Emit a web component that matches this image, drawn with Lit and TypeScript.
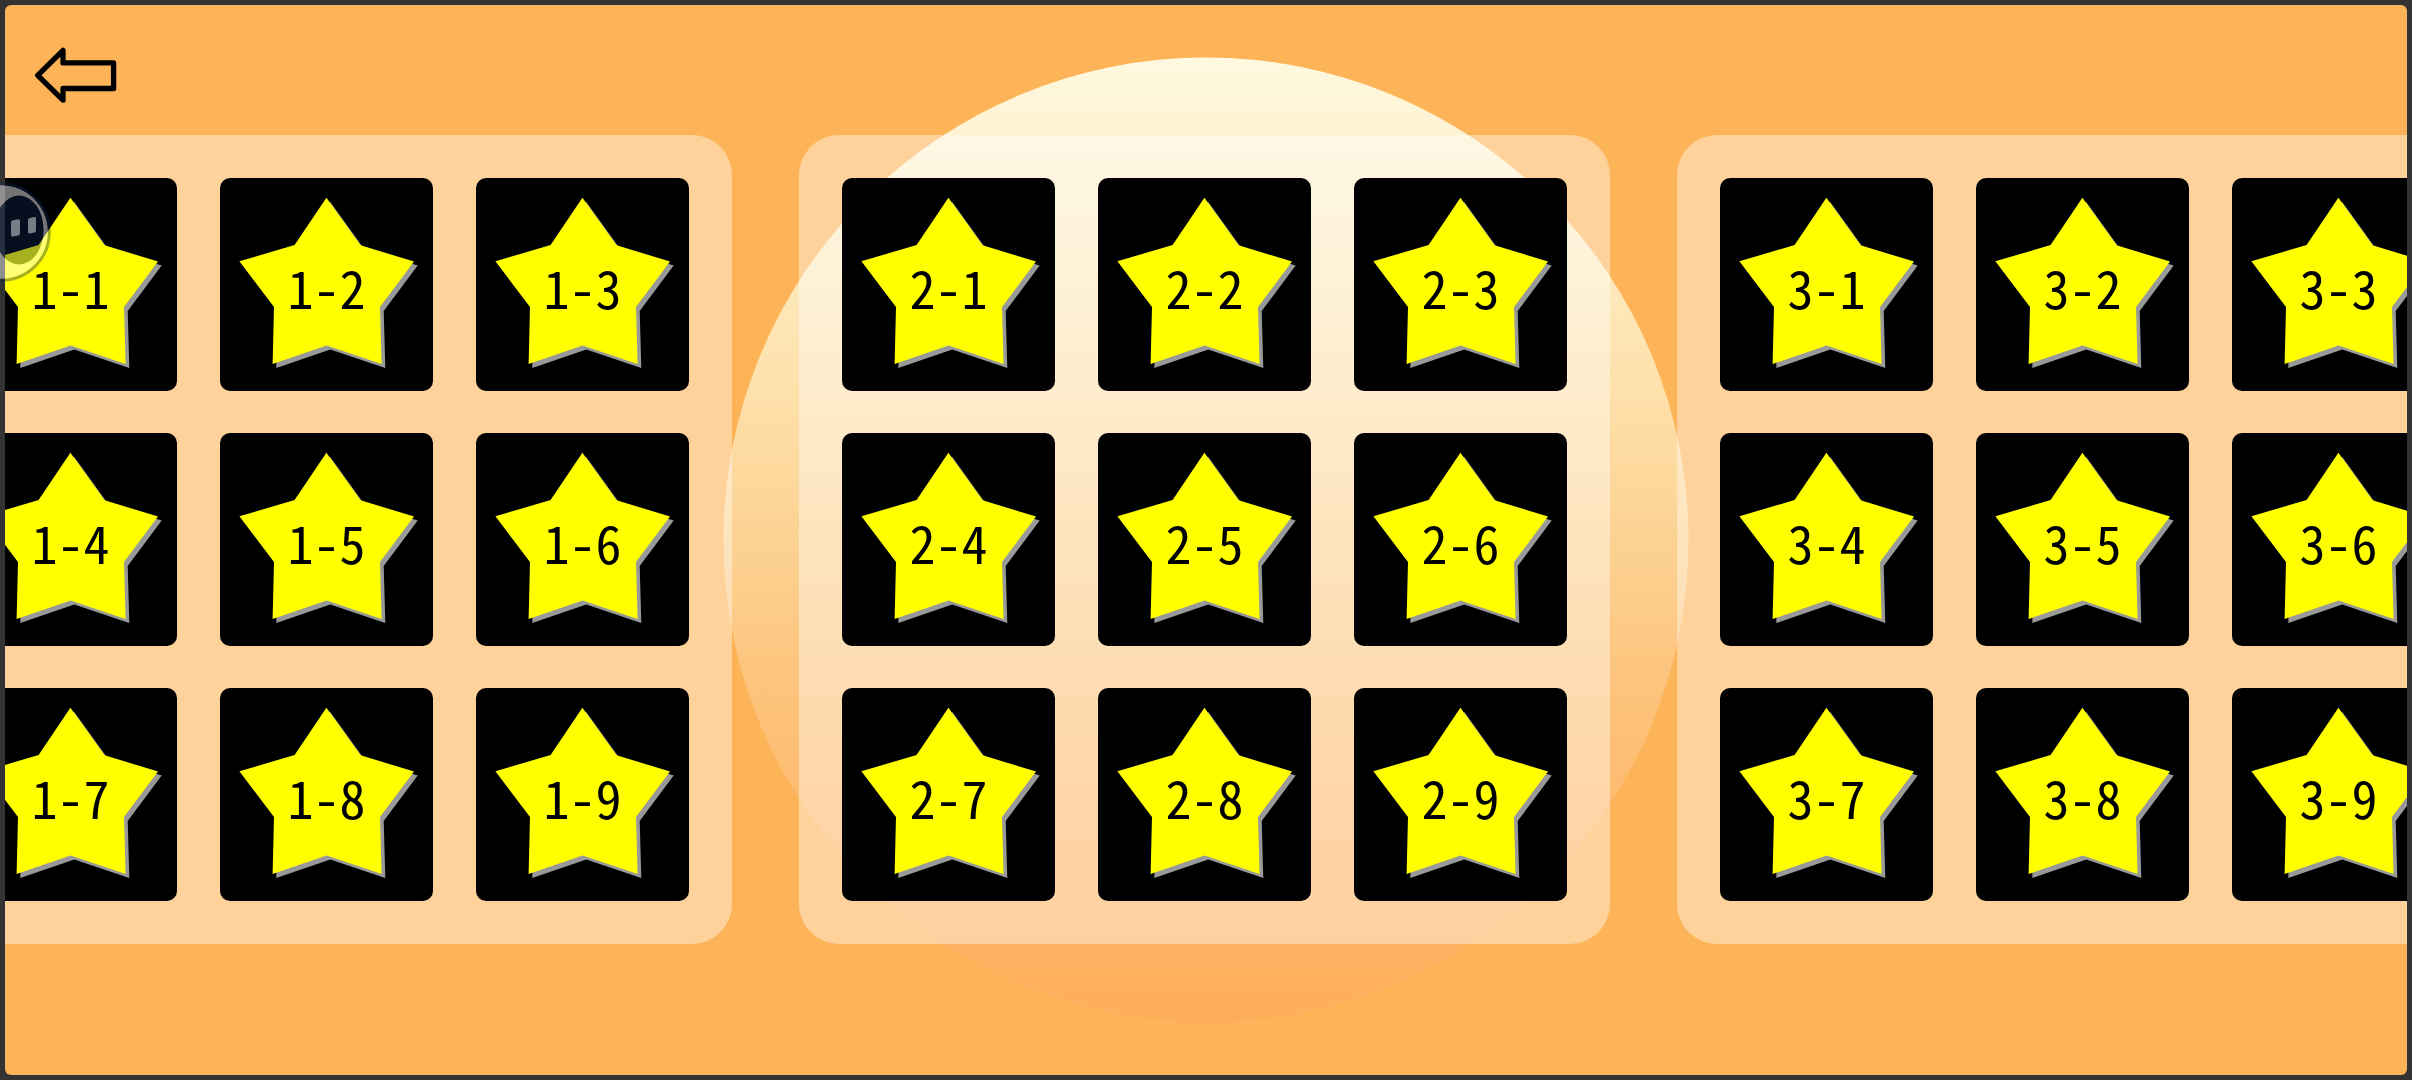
import { LitElement, html, css, svg } from "lit";
import { customElement, property } from "lit/decorators.js";

@customElement("level-tile")
class LevelTile extends LitElement {
  @property() label = "";

  static styles = css`
    :host {
      display: block;
    }
    .tile {
      display: grid;
      place-items: center;
      width: 213px;
      height: 213px;
      padding: 0;
      border: 0;
      border-radius: 10px;
      background: #000;
      color: #000;
      cursor: pointer;
    }
    .star,
    .name {
      grid-area: 1 / 1;
    }
    .star {
      display: block;
      width: 213px;
      height: 213px;
    }
    .name {
      padding-top: 4px;
      font: 300 52px/60px "Noto Sans Mono CJK JP", "Noto Sans Mono CJK SC", "Noto Sans CJK JP", sans-serif;
    }
  `;

  render() {
    const star =
      "106.4,19.7 140.6,67.2 194,83.6 160,129 161.6,186 106.6,167.4 52.6,186 54,129 19.4,83.3 74.6,67";
    return html`
      <button class="tile">
        <svg class="star" viewBox="0 0 213 213" aria-hidden="true">
          ${svg`<polygon points=${star} fill="#999" transform="translate(3.7 4)"></polygon>
          <polygon points=${star} fill="#ff0"></polygon>`}
        </svg>
        <span class="name">${this.label}</span>
      </button>
    `;
  }
}

@customElement("app-root")
class AppRoot extends LitElement {
  static styles = css`
    :host {
      display: block;
    }
    .screen {
      position: relative;
      box-sizing: border-box;
      min-height: 100vh;
      padding: 5px;
      background: #333;
      overflow: hidden;
    }
    .stage {
      position: relative;
      display: flex;
      flex-direction: column;
      box-sizing: border-box;
      min-height: calc(100vh - 10px);
      border-radius: 6px;
      background: #fdb458;
      overflow: hidden;
    }
    .sun {
      position: absolute;
      top: 50%;
      left: 50%;
      width: 965px;
      height: 965px;
      transform: translate(-50%, -50%);
      border-radius: 50%;
      background: linear-gradient(#fff9e0, #fef3d2 8%, #fee0aa 35%, #fcd292 50%, #fdc27a 67%, #feb262 90%, #feae5b);
    }
    .bar {
      position: relative;
      display: flex;
      align-items: center;
      height: 130px;
      padding: 10px 30px 0;
      box-sizing: border-box;
    }
    .back {
      padding: 0;
      border: 0;
      background: none;
      cursor: pointer;
    }
    .arrow {
      display: block;
      width: 82px;
      height: 56px;
    }
    .worlds {
      position: relative;
      display: flex;
      justify-content: center;
      gap: 67px;
      padding-right: 3px;
    }
    .world {
      flex: none;
      display: grid;
      grid-template-columns: repeat(3, 213px);
      gap: 42px 43px;
      padding: 43px;
      border-radius: 40px;
      background: rgba(255, 255, 255, 0.4);
    }
    .buddy {
      position: absolute;
      top: 182px;
      left: 0;
      padding: 0;
      border: 0;
      background: none;
      cursor: pointer;
    }
    .face {
      display: block;
      width: 54px;
      height: 102px;
    }
  `;

  render() {
    const levels = [1, 2, 3, 4, 5, 6, 7, 8, 9];
    return html`
      <div class="screen">
        <main class="stage">
          <div class="sun"></div>
          <header class="bar">
            <button class="back" aria-label="Back">
              <svg class="arrow" viewBox="0 0 82 56">
                <path
                  d="M2.7 28.3 28 3.3V15.9H78.6V41.5H28V53.2Z"
                  fill="none"
                  stroke="#000"
                  stroke-width="5.3"
                  stroke-linejoin="round"
                ></path>
              </svg>
            </button>
          </header>
          <div class="worlds">
            ${[1, 2, 3].map(
              (w) => html`<section class="world" aria-label=${`World ${w}`}>
                ${levels.map((n) => html`<level-tile .label=${`${w}-${n}`}></level-tile>`)}
              </section>`
            )}
          </div>
        </main>
        <button class="buddy" aria-label="Assistant">
          <svg class="face" viewBox="0 0 54 102">
            <circle cx="1" cy="50" r="48.3" fill="none" stroke="#102854" stroke-opacity=".37" stroke-width="3"></circle>
            <path
              d="M1 3.2A46.8 46.8 0 0 1 1 96.8A46.8 46.8 0 0 1 1 3.2ZM19 13.5A24.5 34.5 0 0 0 19 82.5A24.5 34.5 0 0 0 19 13.5Z"
              fill="#fff"
              fill-opacity=".46"
              fill-rule="evenodd"
            ></path>
            <ellipse cx="19" cy="48" rx="24.5" ry="34.5" fill="#102854" fill-opacity=".37"></ellipse>
            <path
              d="M13 38.2 18 37.2Q20 37 20 39V51.5Q20 53 18.5 53.4L13 54.5Q11 54.8 11 53V40.5Q11 38.6 13 38.2ZM30 36 34 35Q36 34.7 36 36.5V48.5Q36 50 34.5 50.4L30 51.4Q28 51.7 28 50V38Q28 36.4 30 36Z"
              fill="#fff"
              fill-opacity=".46"
            ></path>
          </svg>
        </button>
      </div>
    `;
  }
}
